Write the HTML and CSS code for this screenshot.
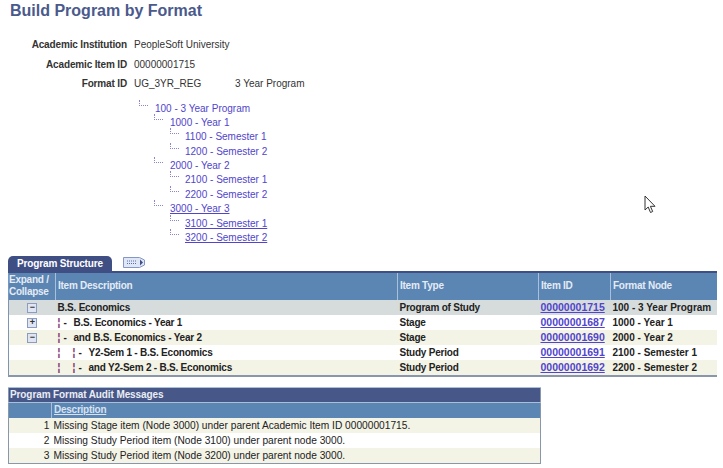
FILE: index.html
```html
<!DOCTYPE html>
<html lang="en">
<head>
    <meta charset="UTF-8">
    <title>Build Program by Format</title>
    <link rel="stylesheet" href="styles.css">
</head>
<body>
    <h1 class="page-title">Build Program by Format</h1>

    <div class="fields">
        <div class="field-label">Academic Institution</div>
        <div class="field-value">PeopleSoft University</div>
        <div class="field-label">Academic Item ID</div>
        <div class="field-value">00000001715</div>
        <div class="field-label">Format ID</div>
        <div class="field-value format-value"><span class="format-id">UG_3YR_REG</span><span>3 Year Program</span></div>
    </div>

    <ul class="tree">
        <li class="lvl0"><a href="#">100 - 3 Year Program</a></li>
        <li class="lvl1"><a href="#">1000 - Year 1</a></li>
        <li class="lvl2"><a href="#">1100 - Semester 1</a></li>
        <li class="lvl2"><a href="#">1200 - Semester 2</a></li>
        <li class="lvl1"><a href="#">2000 - Year 2</a></li>
        <li class="lvl2"><a href="#">2100 - Semester 1</a></li>
        <li class="lvl2"><a href="#">2200 - Semester 2</a></li>
        <li class="lvl1"><a href="#" class="missing">3000 - Year 3</a></li>
        <li class="lvl2"><a href="#" class="missing">3100 - Semester 1</a></li>
        <li class="lvl2"><a href="#" class="missing">3200 - Semester 2</a></li>
    </ul>

    <div class="tabs">
        <div class="tab">Program Structure</div>
        <svg class="tab-icon" width="23" height="11" viewBox="0 0 23 11">
            <path d="M.5.5h16l5 2.500v5l-5 2.500H.5z" fill="#dfe6f6" stroke="#8496c6"/>
            <path d="M17 2.500l3 3-3 3z" fill="#3f4f84"/>
            <path d="M4 4h10M4 6.500h10" stroke="#5a6ca6" stroke-dasharray="1 1"/>
        </svg>
    </div>

    <table class="grid structure">
        <colgroup>
            <col class="c-expand"><col class="c-desc"><col class="c-type"><col class="c-id"><col class="c-node">
        </colgroup>
        <thead>
            <tr>
                <th class="center">Expand / Collapse</th>
                <th>Item Description</th>
                <th>Item Type</th>
                <th>Item ID</th>
                <th>Format Node</th>
            </tr>
        </thead>
        <tbody>
            <tr class="root">
                <td class="center"><span class="toggle">&minus;</span></td>
                <td>B.S. Economics</td>
                <td>Program of Study</td>
                <td><a href="#">00000001715</a></td>
                <td>100 - 3 Year Program</td>
            </tr>
            <tr>
                <td class="center"><span class="toggle">+</span></td>
                <td><span class="dash">&brvbar;</span><span class="tick">-</span>B.S. Economics - Year 1</td>
                <td>Stage</td>
                <td><a href="#">00000001687</a></td>
                <td>1000 - Year 1</td>
            </tr>
            <tr class="alt">
                <td class="center"><span class="toggle">&minus;</span></td>
                <td><span class="dash">&brvbar;</span><span class="tick">-</span>and B.S. Economics - Year 2</td>
                <td>Stage</td>
                <td><a href="#">00000001690</a></td>
                <td>2000 - Year 2</td>
            </tr>
            <tr>
                <td></td>
                <td><span class="dash">&brvbar;</span><span class="dash deep">&brvbar;</span><span class="tick">-</span>Y2-Sem 1 - B.S. Economics</td>
                <td>Study Period</td>
                <td><a href="#">00000001691</a></td>
                <td>2100 - Semester 1</td>
            </tr>
            <tr class="alt">
                <td></td>
                <td><span class="dash">&brvbar;</span><span class="dash deep">&brvbar;</span><span class="tick">-</span>and Y2-Sem 2 - B.S. Economics</td>
                <td>Study Period</td>
                <td><a href="#">00000001692</a></td>
                <td>2200 - Semester 2</td>
            </tr>
        </tbody>
    </table>

    <table class="grid audit">
        <colgroup>
            <col class="c-num"><col>
        </colgroup>
        <thead>
            <tr class="caption-row"><th colspan="2">Program Format Audit Messages</th></tr>
            <tr>
                <th></th>
                <th><a href="#">Description</a></th>
            </tr>
        </thead>
        <tbody>
            <tr class="alt"><td class="num">1</td><td>Missing Stage item (Node 3000) under parent Academic Item ID 00000001715.</td></tr>
            <tr><td class="num">2</td><td>Missing Study Period item (Node 3100) under parent node 3000.</td></tr>
            <tr class="alt"><td class="num">3</td><td>Missing Study Period item (Node 3200) under parent node 3000.</td></tr>
        </tbody>
    </table>

    <svg class="cursor" width="12" height="19" viewBox="0 0 12 19">
        <path d="M1 1v14l3.200-3 2.300 5.500 2.200-1-2.300-5.200H11z" fill="#fff" stroke="#333" stroke-width="1"/>
    </svg>
</body>
</html>
```

FILE: styles.css
```css
html, body {
    overflow: hidden;
}

body {
    margin: 0;
    width: 723px;
    height: 468px;
    position: relative;
    font-family: "Liberation Sans", Arial, sans-serif;
    font-size: 10px;
    color: #333;
    background-color: #fff;
}

.page-title {
    margin: 0;
    padding: 1px 0 0 10px;
    height: 38px;
    box-sizing: border-box;
    font-size: 16px;
    line-height: 19px;
    color: #4a5a8c;
}

.fields {
    display: grid;
    grid-template-columns: 127px 1fr;
    column-gap: 7px;
    grid-auto-rows: 19.5px;
    line-height: 14px;
}

.field-label {
    text-align: right;
    font-weight: bold;
    letter-spacing: -0.15px;
    color: #333;
}

.format-id {
    display: inline-block;
    width: 101px;
}

.tree {
    list-style: none;
    margin: 0;
    padding: 5px 0 0 0;
    height: 159px;
    box-sizing: border-box;
    color: #5145cc;
}

.tree li {
    height: 14.4px;
    line-height: 14.4px;
    position: relative;
}

.tree a {
    color: #5145cc;
    text-decoration: none;
}

.tree a.missing {
    text-decoration: underline;
}

.tree li::before {
    content: "";
    position: absolute;
    top: -2px;
    width: 8px;
    height: 5px;
    border-left: 1px dotted #8a86cc;
    border-bottom: 1px dotted #8a86cc;
}

.lvl0 { padding-left: 155px; }
.lvl1 { padding-left: 170px; }
.lvl2 { padding-left: 185px; }
.lvl0::before { left: 139px; }
.lvl1::before { left: 154px; }
.lvl2::before { left: 170px; }

.tabs {
    display: flex;
    align-items: flex-end;
    margin-left: 8px;
    height: 16px;
    margin-top: -1px;
}

.tab {
    width: 104px;
    height: 15px;
    line-height: 15px;
    text-align: center;
    box-sizing: border-box;
    font-weight: bold;
    letter-spacing: -0.15px;
    color: #fff;
    background-color: #3f4f84;
    border-radius: 5px 5px 0 0;
}

.tab-icon {
    margin: 0 0 3px 11px;
}

.grid {
    border-collapse: collapse;
    table-layout: fixed;
    margin-left: 8px;
    color: #222;
}

.grid th {
    background-color: #5b85b3;
    color: #e4ebf5;
    text-align: left;
    font-weight: bold;
    letter-spacing: -0.25px;
    padding: 0 2px 1px;
    border-left: 1px solid #a9c0db;
    line-height: 12px;
}

.grid th:first-child {
    border-left: none;
}

.grid td {
    padding: 0 2px;
    height: 15px;
    line-height: 15px;
    white-space: nowrap;
    overflow: hidden;
}

.center {
    text-align: center;
}

.grid th.center {
    padding: 0;
}

.structure {
    width: 708px;
    border-top: 2px solid #3f4f84;
    border-left: 1px solid #7f93b5;
    font-weight: bold;
}

.structure thead tr {
    height: 28px;
}

.structure td {
    letter-spacing: -0.22px;
}

.structure td:nth-child(4) {
    font-size: 10.5px;
    letter-spacing: 0;
}

.structure td:nth-child(5) {
    letter-spacing: 0;
}

.c-expand { width: 47px; }
.c-desc { width: 342px; }
.c-type { width: 141px; }
.c-id { width: 72px; }
.c-node { width: 106px; }

.structure tbody tr:last-child td {
    border-bottom: 2px solid #8a96ac;
}

.grid a {
    color: #5145cc;
}

.grid tr.alt td {
    background-color: #f3f3e6;
}

.grid tr.root td {
    background-color: #d6dcdc;
}

.toggle {
    display: inline-block;
    width: 8px;
    height: 8px;
    line-height: 7px;
    font-size: 9px;
    text-align: center;
    vertical-align: 1px;
    color: #333;
    background-color: #dfe5f2;
    border: 1px solid #8c9cc0;
}

.dash {
    color: #7a2f6a;
    display: inline-block;
    width: 4px;
}

.dash.deep {
    margin-left: 11px;
}

.tick {
    display: inline-block;
    width: 10px;
    margin-left: 2px;
}

.audit {
    width: 533px;
    margin-top: 10px;
    border: 1px solid #8a96ac;
    border-top: none;
    font-weight: normal;
}

.audit td {
    font-size: 10.2px;
    padding-top: 1px;
    height: 14px;
    line-height: 14px;
}

.c-num { width: 43px; }

.audit .caption-row th {
    background-color: #475787;
    color: #e9edf5;
    letter-spacing: -0.1px;
    line-height: 14px;
    padding: 0 1px;
    border-left: none;
}

.audit th {
    height: 14px;
    border-top: 1px solid #a9c0db;
}

.audit th a {
    color: #d8e2f0;
}

.audit .num {
    text-align: right;
}

.cursor {
    position: absolute;
    left: 644px;
    top: 195px;
}
```
